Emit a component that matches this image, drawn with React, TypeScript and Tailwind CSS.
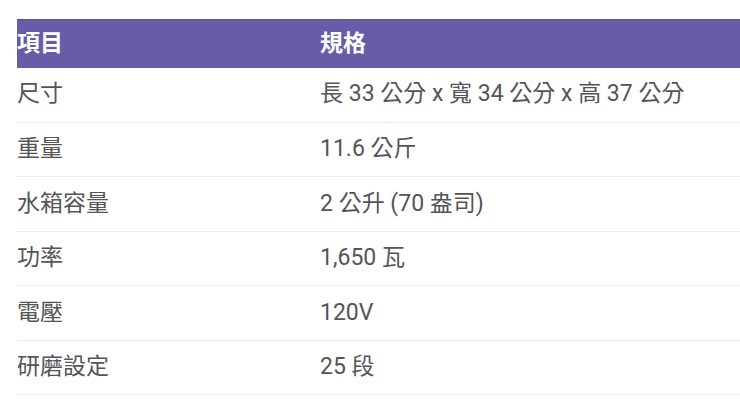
const rows: [string, string][] = [
  ["尺寸", "長 33 公分 x 寬 34 公分 x 高 37 公分"],
  ["重量", "11.6 公斤"],
  ["水箱容量", "2 公升 (70 盎司)"],
  ["功率", "1,650 瓦"],
  ["電壓", "120V"],
  ["研磨設定", "25 段"],
];

export default function App() {
  return (
    <div
      className="w-[740px] h-[412px] bg-white pl-[17px] pt-[19px] overflow-hidden"
      style={{ fontFamily: 'Roboto, "Noto Sans CJK TC", sans-serif' }}
    >
      <table className="w-full border-collapse text-left">
        <thead>
          <tr className="h-[48px] bg-[#665ca8] border-t border-[#5a519a]">
            <th className="w-[303px] p-0 text-[23px] font-bold text-white">項目</th>
            <th className="p-0 text-[23px] font-bold text-white">規格</th>
          </tr>
        </thead>
        <tbody>
          {rows.map(([k, v]) => (
            <tr key={k} className="h-[54.5px] border-b border-[#ececec]">
              <td className="p-0 text-[23px] text-[#555555]">{k}</td>
              <td className="p-0 text-[23px] text-[#555555]">{v}</td>
            </tr>
          ))}
        </tbody>
      </table>
    </div>
  );
}
